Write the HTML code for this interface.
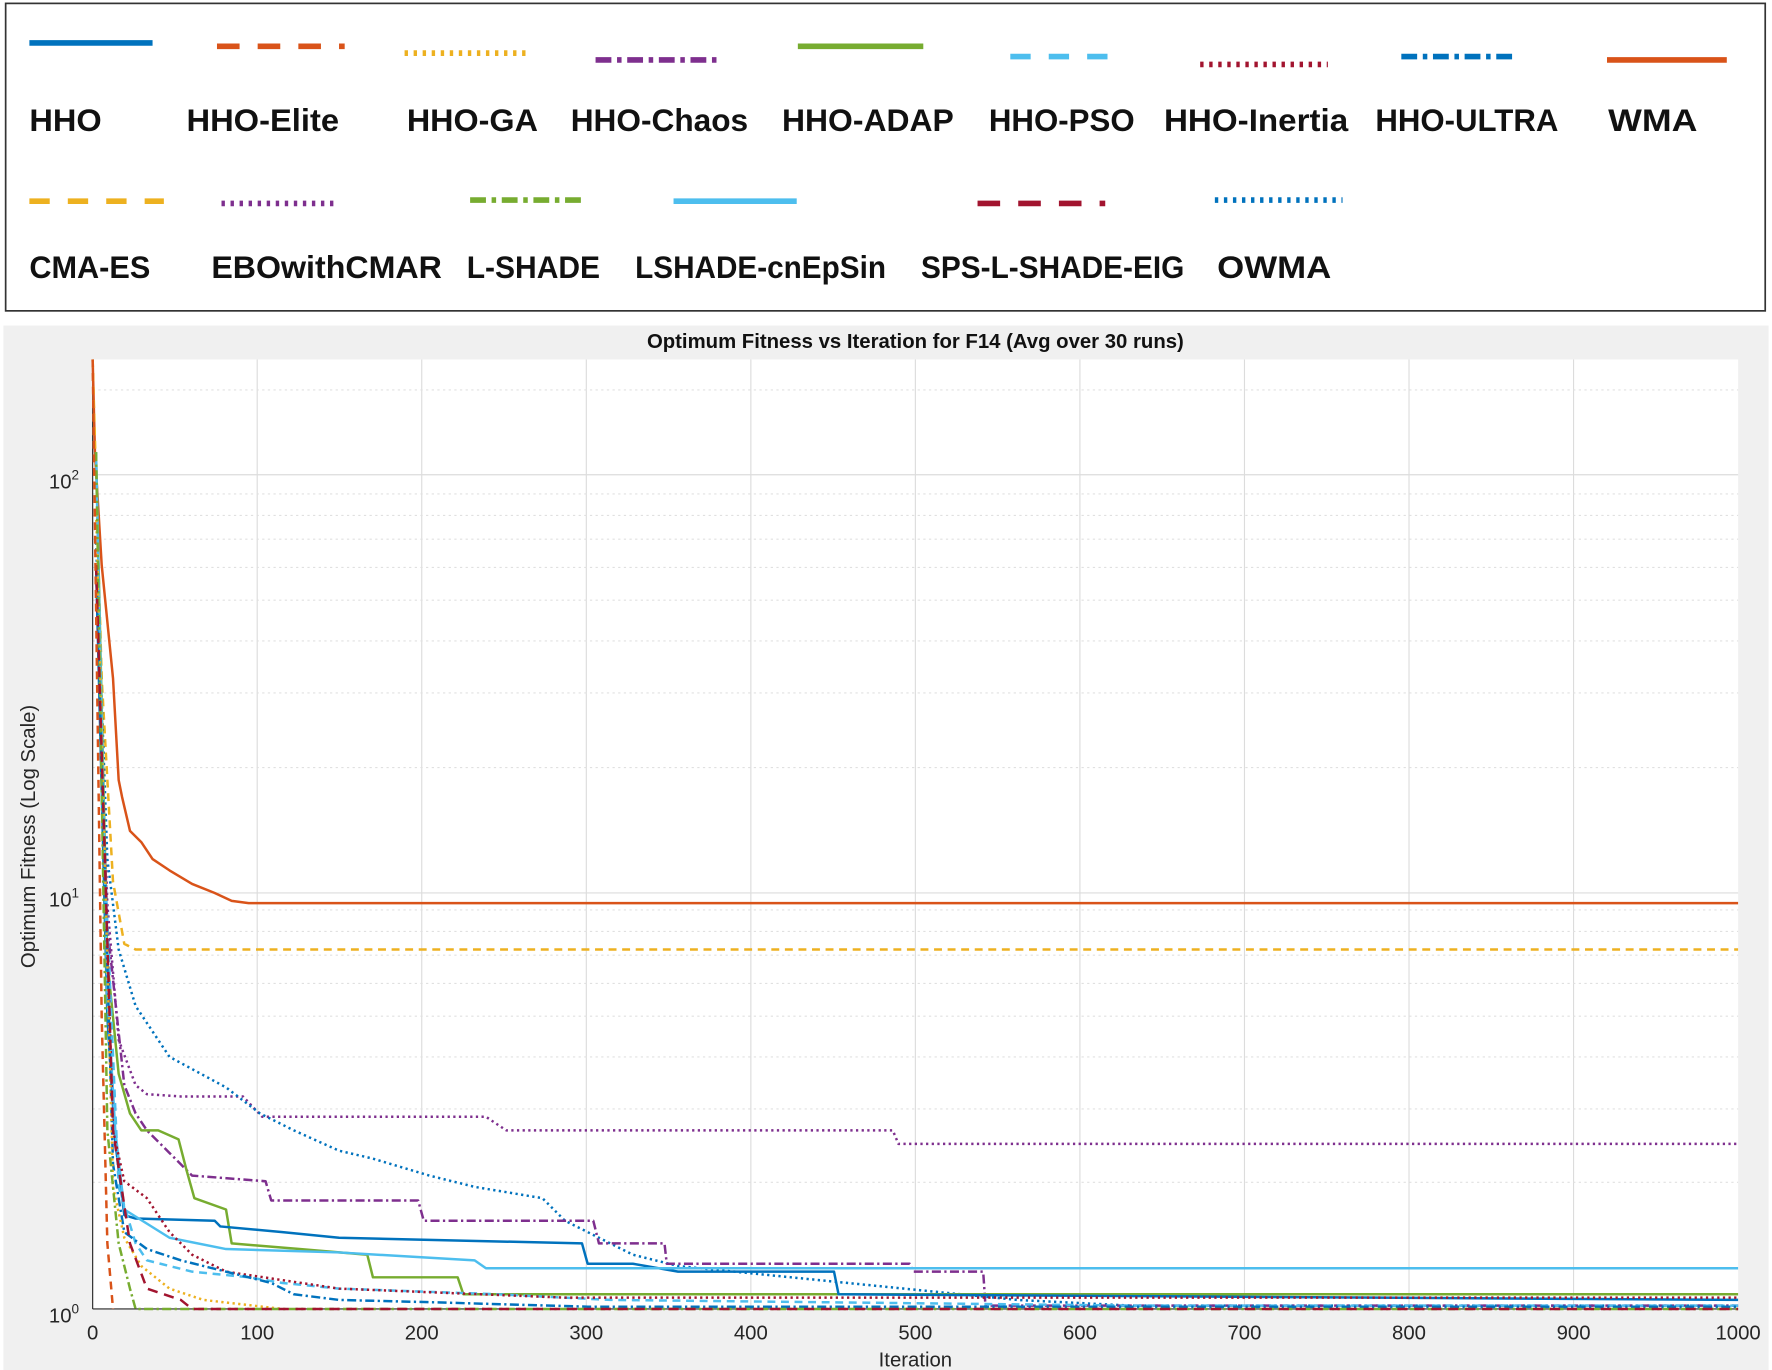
<!DOCTYPE html>
<html><head><meta charset="utf-8"><style>
html,body{margin:0;padding:0;background:#fff;width:1772px;height:1370px;overflow:hidden}
svg{display:block}
.lg{font-family:"Liberation Sans",sans-serif;font-weight:bold;font-size:28px;fill:#111}
.tk{font-family:"Liberation Sans",sans-serif;font-size:18px;fill:#262626}
</style></head><body>
<svg width="1772" height="1370" viewBox="0 0 1568 1212" preserveAspectRatio="none" xmlns="http://www.w3.org/2000/svg">
<rect x="0" y="0" width="1568" height="1212" fill="#fff"/>
<rect x="5" y="3" width="1557" height="272" fill="#fff" stroke="#333" stroke-width="1.5"/>
<g fill="none" stroke-width="5">
<line x1="26" y1="38" x2="135" y2="38" stroke="#0072BD"/>
<line x1="192" y1="41" x2="305" y2="41" stroke="#D95319" stroke-dasharray="20,16"/>
<line x1="358" y1="47" x2="470" y2="47" stroke="#EDB120" stroke-dasharray="3,5"/>
<line x1="527" y1="53" x2="635" y2="53" stroke="#7E2F8E" stroke-dasharray="14,5,4,5"/>
<line x1="706" y1="41" x2="817" y2="41" stroke="#77AC30"/>
<line x1="894" y1="50" x2="983" y2="50" stroke="#4DBEEE" stroke-dasharray="18,16"/>
<line x1="1062" y1="57" x2="1175" y2="57" stroke="#A2142F" stroke-dasharray="3,5"/>
<line x1="1240" y1="50" x2="1342" y2="50" stroke="#0072BD" stroke-dasharray="14,5,4,5"/>
<line x1="1422" y1="53" x2="1528" y2="53" stroke="#D95319"/>
<line x1="26" y1="178" x2="145" y2="178" stroke="#EDB120" stroke-dasharray="18,16"/>
<line x1="196" y1="180" x2="298" y2="180" stroke="#7E2F8E" stroke-dasharray="3,5"/>
<line x1="416" y1="177" x2="518" y2="177" stroke="#77AC30" stroke-dasharray="14,5,4,5"/>
<line x1="596" y1="178" x2="705" y2="178" stroke="#4DBEEE"/>
<line x1="865" y1="180" x2="978" y2="180" stroke="#A2142F" stroke-dasharray="20,16"/>
<line x1="1075" y1="177" x2="1188" y2="177" stroke="#0072BD" stroke-dasharray="3,5"/>
</g>
<g class="lg">
<text x="26" y="116" textLength="64" lengthAdjust="spacingAndGlyphs">HHO</text><text x="165" y="116" textLength="135" lengthAdjust="spacingAndGlyphs">HHO-Elite</text><text x="360" y="116" textLength="116" lengthAdjust="spacingAndGlyphs">HHO-GA</text>
<text x="505" y="116" textLength="157" lengthAdjust="spacingAndGlyphs">HHO-Chaos</text><text x="692" y="116" textLength="152" lengthAdjust="spacingAndGlyphs">HHO-ADAP</text><text x="875" y="116" textLength="129" lengthAdjust="spacingAndGlyphs">HHO-PSO</text>
<text x="1030" y="116" textLength="163" lengthAdjust="spacingAndGlyphs">HHO-Inertia</text><text x="1217" y="116" textLength="162" lengthAdjust="spacingAndGlyphs">HHO-ULTRA</text><text x="1423" y="116" textLength="79" lengthAdjust="spacingAndGlyphs">WMA</text>
<text x="26" y="246" textLength="107" lengthAdjust="spacingAndGlyphs">CMA-ES</text><text x="187" y="246" textLength="204" lengthAdjust="spacingAndGlyphs">EBOwithCMAR</text><text x="413" y="246" textLength="118" lengthAdjust="spacingAndGlyphs">L-SHADE</text>
<text x="562" y="246" textLength="222" lengthAdjust="spacingAndGlyphs">LSHADE-cnEpSin</text><text x="815" y="246" textLength="233" lengthAdjust="spacingAndGlyphs">SPS-L-SHADE-EIG</text><text x="1077" y="246" textLength="101" lengthAdjust="spacingAndGlyphs">OWMA</text>
</g>
<rect x="3" y="288" width="1562" height="924" fill="#f0f0f0"/>
<text x="810" y="308" text-anchor="middle" font-family="Liberation Sans,sans-serif" font-weight="bold" font-size="18" fill="#111">Optimum Fitness vs Iteration for F14 (Avg over 30 runs)</text>
<rect x="82" y="318" width="1456" height="840" fill="#fff"/>
<g stroke="#dcdcdc" stroke-width="1">
<line x1="227.6" y1="318" x2="227.6" y2="1158"/><line x1="373.2" y1="318" x2="373.2" y2="1158"/><line x1="518.8" y1="318" x2="518.8" y2="1158"/><line x1="664.4" y1="318" x2="664.4" y2="1158"/><line x1="810" y1="318" x2="810" y2="1158"/><line x1="955.6" y1="318" x2="955.6" y2="1158"/><line x1="1101.2" y1="318" x2="1101.2" y2="1158"/><line x1="1246.8" y1="318" x2="1246.8" y2="1158"/><line x1="1392.4" y1="318" x2="1392.4" y2="1158"/>
<line x1="82" y1="420" x2="1538" y2="420"/><line x1="82" y1="790" x2="1538" y2="790"/>
</g>
<g stroke="#e0e0e0" stroke-width="1" stroke-dasharray="2,3">
<line x1="82" y1="1046" x2="1538" y2="1046"/><line x1="82" y1="981" x2="1538" y2="981"/><line x1="82" y1="935" x2="1538" y2="935"/><line x1="82" y1="899" x2="1538" y2="899"/><line x1="82" y1="870" x2="1538" y2="870"/><line x1="82" y1="845" x2="1538" y2="845"/><line x1="82" y1="824" x2="1538" y2="824"/><line x1="82" y1="805" x2="1538" y2="805"/>
<line x1="82" y1="679" x2="1538" y2="679"/><line x1="82" y1="613" x2="1538" y2="613"/><line x1="82" y1="567" x2="1538" y2="567"/><line x1="82" y1="531" x2="1538" y2="531"/><line x1="82" y1="502" x2="1538" y2="502"/><line x1="82" y1="477" x2="1538" y2="477"/><line x1="82" y1="456" x2="1538" y2="456"/><line x1="82" y1="437" x2="1538" y2="437"/>
<line x1="82" y1="345" x2="1538" y2="345"/>
</g>
<line x1="82" y1="1158" x2="1538" y2="1158" stroke="#262626" stroke-width="1"/>
<line x1="82" y1="318" x2="82" y2="1158" stroke="#262626" stroke-width="1"/>
<g fill="none" stroke-width="2.2" stroke-linejoin="round">
<polyline stroke="#D95319" points="82,318 84,400 90,500 100,600 105,690 108,705 115,735 125,745 135,760 150,770 170,782 190,790 205,797 220,799 1538,799"/>
<polyline stroke="#EDB120" stroke-dasharray="7,5" points="82,318 90,600 100,780 110,835 120,840 1538,840"/>
<polyline stroke="#7E2F8E" stroke-dasharray="2,3" points="85,500 95,800 105,920 120,960 130,968 160,970 215,970 232,988 430,988 448,1000 790,1000 795,1012 1538,1012"/>
<polyline stroke="#0072BD" stroke-dasharray="2,3" points="85,480 95,760 105,840 120,890 150,935 200,962 230,985 260,1000 300,1018 330,1025 380,1040 420,1050 480,1060 500,1080 530,1095 560,1110 600,1120 700,1130 800,1140 900,1150 1000,1155 1538,1155"/>
<polyline stroke="#7E2F8E" stroke-dasharray="8,3,2,3" points="85,500 95,820 110,960 120,985 130,1000 150,1020 170,1040 235,1045 240,1062 370,1062 375,1080 525,1080 530,1100 588,1100 590,1118 805,1118 808,1125 870,1125 872,1155 1538,1155"/>
<polyline stroke="#77AC30" points="85,400 95,850 105,950 115,985 125,1000 140,1000 158,1008 165,1035 172,1060 200,1070 205,1100 265,1105 325,1110 330,1130 405,1130 410,1145 1538,1145"/>
<polyline stroke="#0072BD" points="85,500 95,900 102,1010 110,1075 120,1078 190,1080 195,1085 250,1090 300,1095 515,1100 520,1118 560,1118 600,1125 738,1125 742,1145 1538,1150"/>
<polyline stroke="#4DBEEE" points="85,400 95,880 102,1000 110,1070 150,1095 200,1105 300,1108 420,1115 430,1122 1538,1122"/>
<polyline stroke="#4DBEEE" stroke-dasharray="7,5" points="90,700 105,1050 120,1100 130,1115 170,1125 220,1130 250,1135 300,1140 440,1145 540,1150 1000,1155 1538,1155"/>
<polyline stroke="#A2142F" stroke-dasharray="2,3" points="85,500 100,1000 110,1045 130,1060 150,1090 170,1110 200,1125 300,1140 500,1148 1538,1148"/>
<polyline stroke="#0072BD" stroke-dasharray="8,3,2,3" points="85,500 100,1030 110,1090 130,1105 160,1115 200,1125 240,1135 260,1145 300,1150 380,1152 520,1156 1538,1156"/>
<polyline stroke="#EDB120" stroke-dasharray="2,3" points="85,450 100,1050 110,1095 125,1120 150,1140 180,1150 250,1158"/>
<polyline stroke="#77AC30" stroke-dasharray="8,3,2,3" points="85,400 95,1000 105,1100 115,1140 120,1158 1538,1158"/>
<polyline stroke="#A2142F" stroke-dasharray="9,6" points="85,500 100,1000 115,1100 130,1140 160,1150 170,1158 1538,1158"/>
<polyline stroke="#D95319" stroke-dasharray="7,5" points="82,318 90,900 95,1100 100,1158"/>
</g>
<g class="tk" text-anchor="middle">
<text x="82" y="1185">0</text><text x="227.6" y="1185">100</text><text x="373.2" y="1185">200</text><text x="518.8" y="1185">300</text><text x="664.4" y="1185">400</text><text x="810" y="1185">500</text><text x="955.6" y="1185">600</text><text x="1101.2" y="1185">700</text><text x="1246.8" y="1185">800</text><text x="1392.4" y="1185">900</text><text x="1538" y="1185">1000</text>
<text x="810" y="1209">Iteration</text>
</g>
<g class="tk" text-anchor="end">
<text x="70" y="1170">10<tspan font-size="12" dy="-8">0</tspan></text>
<text x="70" y="802">10<tspan font-size="12" dy="-8">1</tspan></text>
<text x="70" y="432">10<tspan font-size="12" dy="-8">2</tspan></text>
</g>
<text class="tk" transform="translate(31,740) rotate(-90)" text-anchor="middle">Optimum Fitness (Log Scale)</text>
</svg>
</body></html>
